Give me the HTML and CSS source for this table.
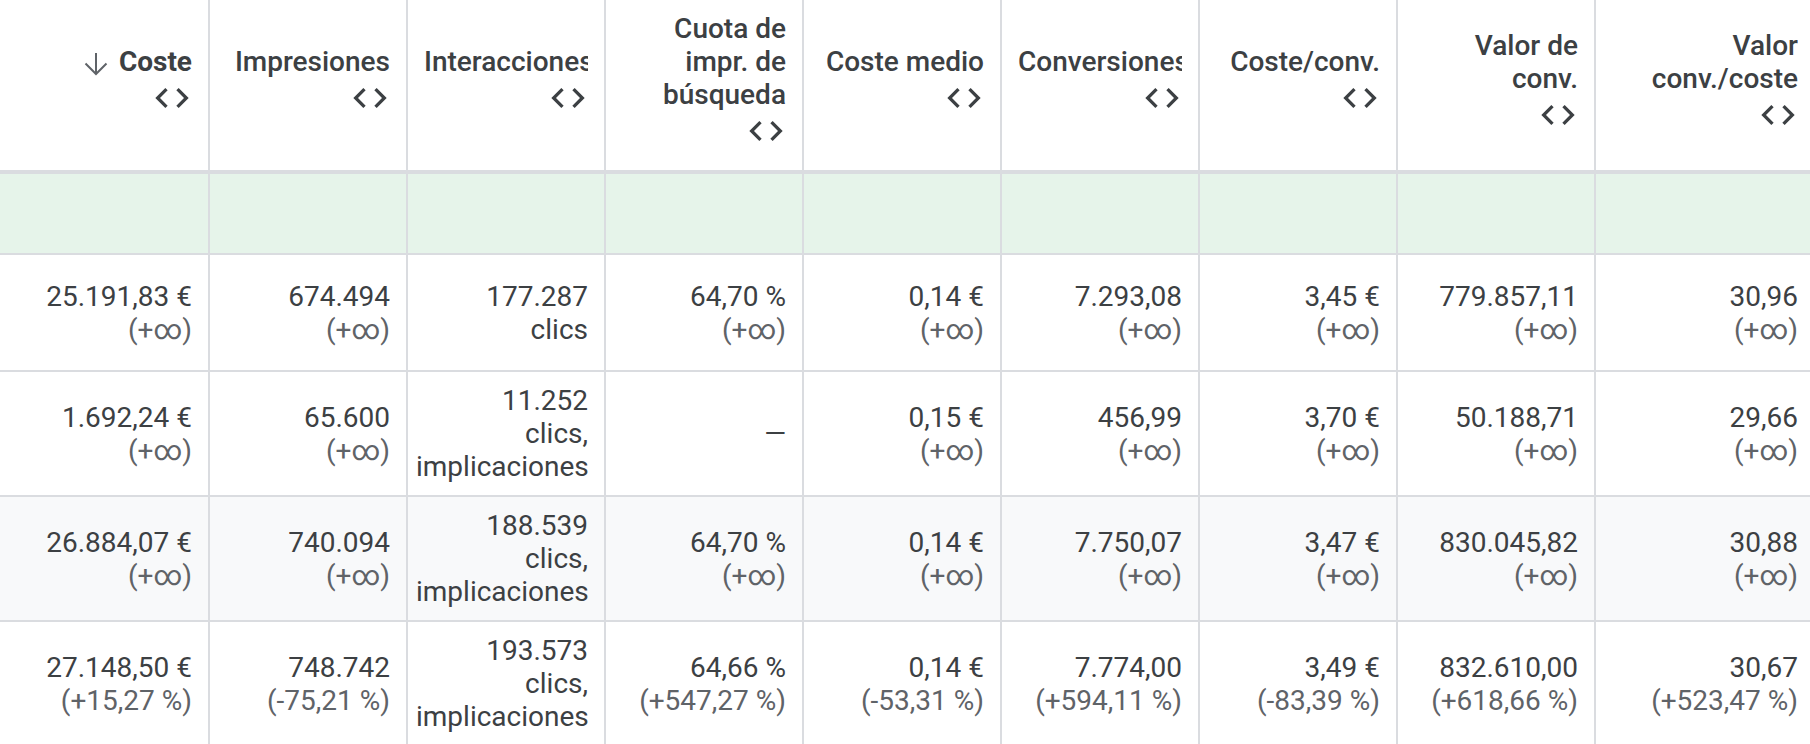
FILE: index.html
```html
<!DOCTYPE html>
<html lang="es">
<head>
<meta charset="utf-8">
<title>Tabla de rendimiento</title>
<link rel="stylesheet" href="styles.css">
</head>
<body>
<table class="grid">
  <colgroup>
    <col class="col-first">
    <col class="col-mid"><col class="col-mid"><col class="col-mid"><col class="col-mid">
    <col class="col-mid"><col class="col-mid"><col class="col-mid">
    <col class="col-last">
  </colgroup>
  <thead>
    <tr class="head-row">
      <th class="sorted">
        <div class="title"><svg class="sort-arrow" width="24" height="32" viewBox="0 0 24 32"><path d="M12 8V28.5M1.5 18.5L12 29L22.5 18.5" fill="none" stroke="#5f6368" stroke-width="2"/></svg>Coste</div>
        <svg class="expand" width="40" height="40" viewBox="0 0 24 24"><path d="M9.4 16.6L4.8 12l4.6-4.6L8 6l-6 6 6 6 1.4-1.4zm5.2 0l4.6-4.6-4.6-4.6L16 6l6 6-6 6-1.4-1.4z"/></svg>
      </th>
      <th>
        <div class="title">Impresiones</div>
        <svg class="expand" width="40" height="40" viewBox="0 0 24 24"><path d="M9.4 16.6L4.8 12l4.6-4.6L8 6l-6 6 6 6 1.4-1.4zm5.2 0l4.6-4.6-4.6-4.6L16 6l6 6-6 6-1.4-1.4z"/></svg>
      </th>
      <th>
        <div class="title">Interacciones</div>
        <svg class="expand" width="40" height="40" viewBox="0 0 24 24"><path d="M9.4 16.6L4.8 12l4.6-4.6L8 6l-6 6 6 6 1.4-1.4zm5.2 0l4.6-4.6-4.6-4.6L16 6l6 6-6 6-1.4-1.4z"/></svg>
      </th>
      <th>
        <div class="title">Cuota de impr. de búsqueda</div>
        <svg class="expand" width="40" height="40" viewBox="0 0 24 24"><path d="M9.4 16.6L4.8 12l4.6-4.6L8 6l-6 6 6 6 1.4-1.4zm5.2 0l4.6-4.6-4.6-4.6L16 6l6 6-6 6-1.4-1.4z"/></svg>
      </th>
      <th>
        <div class="title">Coste medio</div>
        <svg class="expand" width="40" height="40" viewBox="0 0 24 24"><path d="M9.4 16.6L4.8 12l4.6-4.6L8 6l-6 6 6 6 1.4-1.4zm5.2 0l4.6-4.6-4.6-4.6L16 6l6 6-6 6-1.4-1.4z"/></svg>
      </th>
      <th>
        <div class="title">Conversiones</div>
        <svg class="expand" width="40" height="40" viewBox="0 0 24 24"><path d="M9.4 16.6L4.8 12l4.6-4.6L8 6l-6 6 6 6 1.4-1.4zm5.2 0l4.6-4.6-4.6-4.6L16 6l6 6-6 6-1.4-1.4z"/></svg>
      </th>
      <th>
        <div class="title">Coste/conv.</div>
        <svg class="expand" width="40" height="40" viewBox="0 0 24 24"><path d="M9.4 16.6L4.8 12l4.6-4.6L8 6l-6 6 6 6 1.4-1.4zm5.2 0l4.6-4.6-4.6-4.6L16 6l6 6-6 6-1.4-1.4z"/></svg>
      </th>
      <th>
        <div class="title">Valor de conv.</div>
        <svg class="expand" width="40" height="40" viewBox="0 0 24 24"><path d="M9.4 16.6L4.8 12l4.6-4.6L8 6l-6 6 6 6 1.4-1.4zm5.2 0l4.6-4.6-4.6-4.6L16 6l6 6-6 6-1.4-1.4z"/></svg>
      </th>
      <th>
        <div class="title">Valor <span class="nowrap">conv./coste</span></div>
        <svg class="expand" width="40" height="40" viewBox="0 0 24 24"><path d="M9.4 16.6L4.8 12l4.6-4.6L8 6l-6 6 6 6 1.4-1.4zm5.2 0l4.6-4.6-4.6-4.6L16 6l6 6-6 6-1.4-1.4z"/></svg>
      </th>
    </tr>
  </thead>
  <tbody>
    <tr class="summary-row">
      <td></td><td></td><td></td><td></td><td></td><td></td><td></td><td></td><td></td>
    </tr>
    <tr class="row-short">
      <td><div>25.191,83&nbsp;€</div><div class="chg">(+∞)</div></td>
      <td><div>674.494</div><div class="chg">(+∞)</div></td>
      <td><div>177.287</div><div>clics</div></td>
      <td><div>64,70&nbsp;%</div><div class="chg">(+∞)</div></td>
      <td><div>0,14&nbsp;€</div><div class="chg">(+∞)</div></td>
      <td><div>7.293,08</div><div class="chg">(+∞)</div></td>
      <td><div>3,45&nbsp;€</div><div class="chg">(+∞)</div></td>
      <td><div>779.857,11</div><div class="chg">(+∞)</div></td>
      <td><div>30,96</div><div class="chg">(+∞)</div></td>
    </tr>
    <tr>
      <td><div>1.692,24&nbsp;€</div><div class="chg">(+∞)</div></td>
      <td><div>65.600</div><div class="chg">(+∞)</div></td>
      <td><div>11.252</div><div>clics, implicaciones</div></td>
      <td><div>—</div></td>
      <td><div>0,15&nbsp;€</div><div class="chg">(+∞)</div></td>
      <td><div>456,99</div><div class="chg">(+∞)</div></td>
      <td><div>3,70&nbsp;€</div><div class="chg">(+∞)</div></td>
      <td><div>50.188,71</div><div class="chg">(+∞)</div></td>
      <td><div>29,66</div><div class="chg">(+∞)</div></td>
    </tr>
    <tr class="row-alt">
      <td><div>26.884,07&nbsp;€</div><div class="chg">(+∞)</div></td>
      <td><div>740.094</div><div class="chg">(+∞)</div></td>
      <td><div>188.539</div><div>clics, implicaciones</div></td>
      <td><div>64,70&nbsp;%</div><div class="chg">(+∞)</div></td>
      <td><div>0,14&nbsp;€</div><div class="chg">(+∞)</div></td>
      <td><div>7.750,07</div><div class="chg">(+∞)</div></td>
      <td><div>3,47&nbsp;€</div><div class="chg">(+∞)</div></td>
      <td><div>830.045,82</div><div class="chg">(+∞)</div></td>
      <td><div>30,88</div><div class="chg">(+∞)</div></td>
    </tr>
    <tr>
      <td><div>27.148,50&nbsp;€</div><div class="chg">(+15,27&nbsp;%)</div></td>
      <td><div>748.742</div><div class="chg">(-75,21&nbsp;%)</div></td>
      <td><div>193.573</div><div>clics, implicaciones</div></td>
      <td><div>64,66&nbsp;%</div><div class="chg">(+547,27&nbsp;%)</div></td>
      <td><div>0,14&nbsp;€</div><div class="chg">(-53,31&nbsp;%)</div></td>
      <td><div>7.774,00</div><div class="chg">(+594,11&nbsp;%)</div></td>
      <td><div>3,49&nbsp;€</div><div class="chg">(-83,39&nbsp;%)</div></td>
      <td><div>832.610,00</div><div class="chg">(+618,66&nbsp;%)</div></td>
      <td><div>30,67</div><div class="chg">(+523,47&nbsp;%)</div></td>
    </tr>
  </tbody>
</table>
</body>
</html>
```

FILE: styles.css
```css
* {
  box-sizing: border-box;
}

html, body {
  margin: 0;
  padding: 0;
  background: #ffffff;
  overflow: hidden;
}

body {
  font-family: Roboto, "Noto Sans", "Liberation Sans", sans-serif;
  color: #3c4043;
  width: 1810px;
  height: 744px;
}

.grid {
  border-collapse: separate;
  border-spacing: 0;
  table-layout: fixed;
  width: 1816px;
  font-size: 28px;
  line-height: 33px;
}

.col-first { width: 210px; }
.col-mid { width: 198px; }
.col-last { width: 220px; }

.grid th,
.grid td {
  border-right: 2px solid #dadce0;
  border-bottom: 2px solid #dadce0;
  text-align: right;
  vertical-align: middle;
}

.grid th {
  height: 174px;
  padding: 0 16px 7px 16px;
  border-bottom-width: 4px;
  font-weight: 500;
  color: #3c4043;
  background: #ffffff;
}

.grid th.sorted .title {
  font-weight: 700;
}

.title {
  overflow: hidden;
  text-align: right;
}

.nowrap {
  white-space: nowrap;
}

.sort-arrow {
  display: inline-block;
  vertical-align: top;
  margin-right: 11px;
}

.expand {
  display: block;
  margin-left: auto;
  fill: #3c4043;
}

.grid td {
  padding: 12px 16px 12px 8px;
  font-weight: 400;
  color: #3c4043;
}

.grid td .chg {
  color: #5f6368;
}

.summary-row td {
  height: 81px;
  background: #e6f4ea;
  padding: 0;
}

.row-short td {
  height: 117px;
}

.row-alt td {
  background: #f8f9fa;
}
```
